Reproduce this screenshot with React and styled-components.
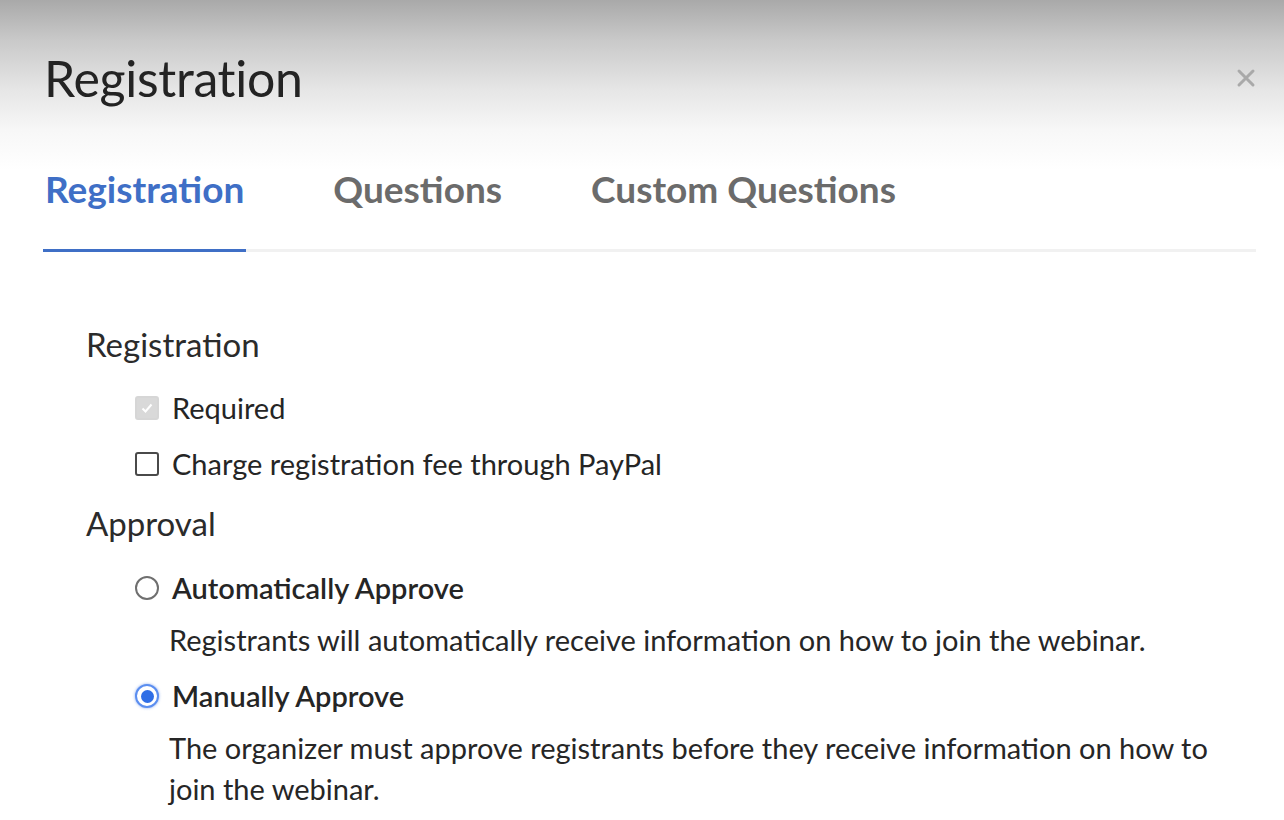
import React from "react";
import styled, { createGlobalStyle } from "styled-components";

const GlobalStyle = createGlobalStyle`
  html, body {
    margin: 0;
    padding: 0;
    background: #fff;
  }
  body {
    font-family: Lato, "Open Sans", sans-serif;
    color: #2b2b2b;
  }
`;

const Dialog = styled.div`
  width: 1284px;
  height: 820px;
  overflow: hidden;
  background: linear-gradient(
    to bottom,
    #a9a9a9 0px,
    #c9c9c9 40px,
    #e6e6e6 90px,
    #f7f7f7 130px,
    #ffffff 170px
  );
`;

const Header = styled.div`
  display: flex;
  justify-content: space-between;
  align-items: center;
  padding: 46px 26px 0 44px;
  height: 64px;
`;

const Title = styled.h1`
  margin: 0;
  font-size: 50px;
  font-weight: 400;
  color: #232323;
  letter-spacing: -0.3px;
`;

const Close = styled.button`
  border: none;
  background: none;
  padding: 0;
  width: 24px;
  height: 24px;
  display: flex;
  align-items: center;
  justify-content: center;
  cursor: pointer;
`;

const Tabs = styled.div`
  display: flex;
  margin: 53px 28px 0 43px;
  border-bottom: 3px solid #f1f1f1;
`;

const Tab = styled.div`
  font-size: 37px;
  font-weight: 700;
  line-height: 44px;
  color: ${(p) => (p.active ? "#3f6fc6" : "#6b6b6b")};
  padding: 4px 2px 38px;
  margin-right: 85px;
  margin-bottom: -3px;
  border-bottom: 3px solid ${(p) => (p.active ? "#3f6fc6" : "transparent")};
`;

const Body = styled.div`
  padding: 72px 0 0 86px;
`;

const SectionLabel = styled.div`
  font-size: 33px;
  color: #2b2b2b;
  line-height: 40px;
  margin-top: ${(p) => p.gap || 0}px;
`;

const Option = styled.label`
  display: flex;
  align-items: center;
  gap: 13px;
  margin-left: 49px;
  margin-top: ${(p) => p.gap || 0}px;
  font-size: 29px;
  line-height: 38px;
  color: #252525;
`;

const Box = styled.span`
  width: 20px;
  height: 20px;
  border-radius: 3px;
  border: 2px solid ${(p) => (p.disabled ? "#d6d6d6" : "#4a4a4a")};
  background: ${(p) => (p.disabled ? "#d9d9d9" : "#fff")};
  display: flex;
  align-items: center;
  justify-content: center;
  flex-shrink: 0;
`;

const Radio = styled.span`
  width: 20px;
  height: 20px;
  border-radius: 50%;
  border: 2px solid ${(p) => (p.checked ? "#5b8ef0" : "#6f6f6f")};
  background: #fff;
  display: flex;
  align-items: center;
  justify-content: center;
  flex-shrink: 0;
  box-shadow: ${(p) => (p.checked ? "0 0 3px rgba(60,115,227,0.6)" : "none")};

  &::after {
    content: "";
    width: 13px;
    height: 13px;
    border-radius: 50%;
    background: ${(p) => (p.checked ? "#2f6ee6" : "transparent")};
  }
`;

const Hint = styled.p`
  margin: 12px 0 0 83px;
  max-width: 1060px;
  font-size: 29px;
  line-height: 41px;
  color: #262626;
`;

const OptionName = styled.span`
  font-weight: ${(p) => (p.strong ? 600 : 400)};
`;

export default function App() {
  return (
    <Dialog>
      <GlobalStyle />
      <Header>
        <Title>Registration</Title>
        <Close aria-label="close">
          <svg width="20" height="20" viewBox="0 0 20 20">
            <path d="M3 3 L17 17 M17 3 L3 17" stroke="#a9a9a9" strokeWidth="3" strokeLinecap="round" />
          </svg>
        </Close>
      </Header>

      <Tabs>
        <Tab active>Registration</Tab>
        <Tab>Questions</Tab>
        <Tab>Custom Questions</Tab>
      </Tabs>

      <Body>
        <SectionLabel>Registration</SectionLabel>
        <Option gap={25}>
          <Box disabled>
            <svg width="14" height="14" viewBox="0 0 14 14">
              <path d="M2.5 7.5 L5.5 10.5 L11.5 3.5" fill="none" stroke="#fff" strokeWidth="2" />
            </svg>
          </Box>
          <OptionName>Required</OptionName>
        </Option>
        <Option gap={18}>
          <Box />
          <OptionName>Charge registration fee through PayPal</OptionName>
        </Option>

        <SectionLabel gap={20}>Approval</SectionLabel>
        <Option gap={26}>
          <Radio />
          <OptionName strong>Automatically Approve</OptionName>
        </Option>
        <Hint>Registrants will automatically receive information on how to join the webinar.</Hint>
        <Option gap={17}>
          <Radio checked />
          <OptionName strong>Manually Approve</OptionName>
        </Option>
        <Hint>
          The organizer must approve registrants before they receive information on how to join the webinar.
        </Hint>
      </Body>
    </Dialog>
  );
}
